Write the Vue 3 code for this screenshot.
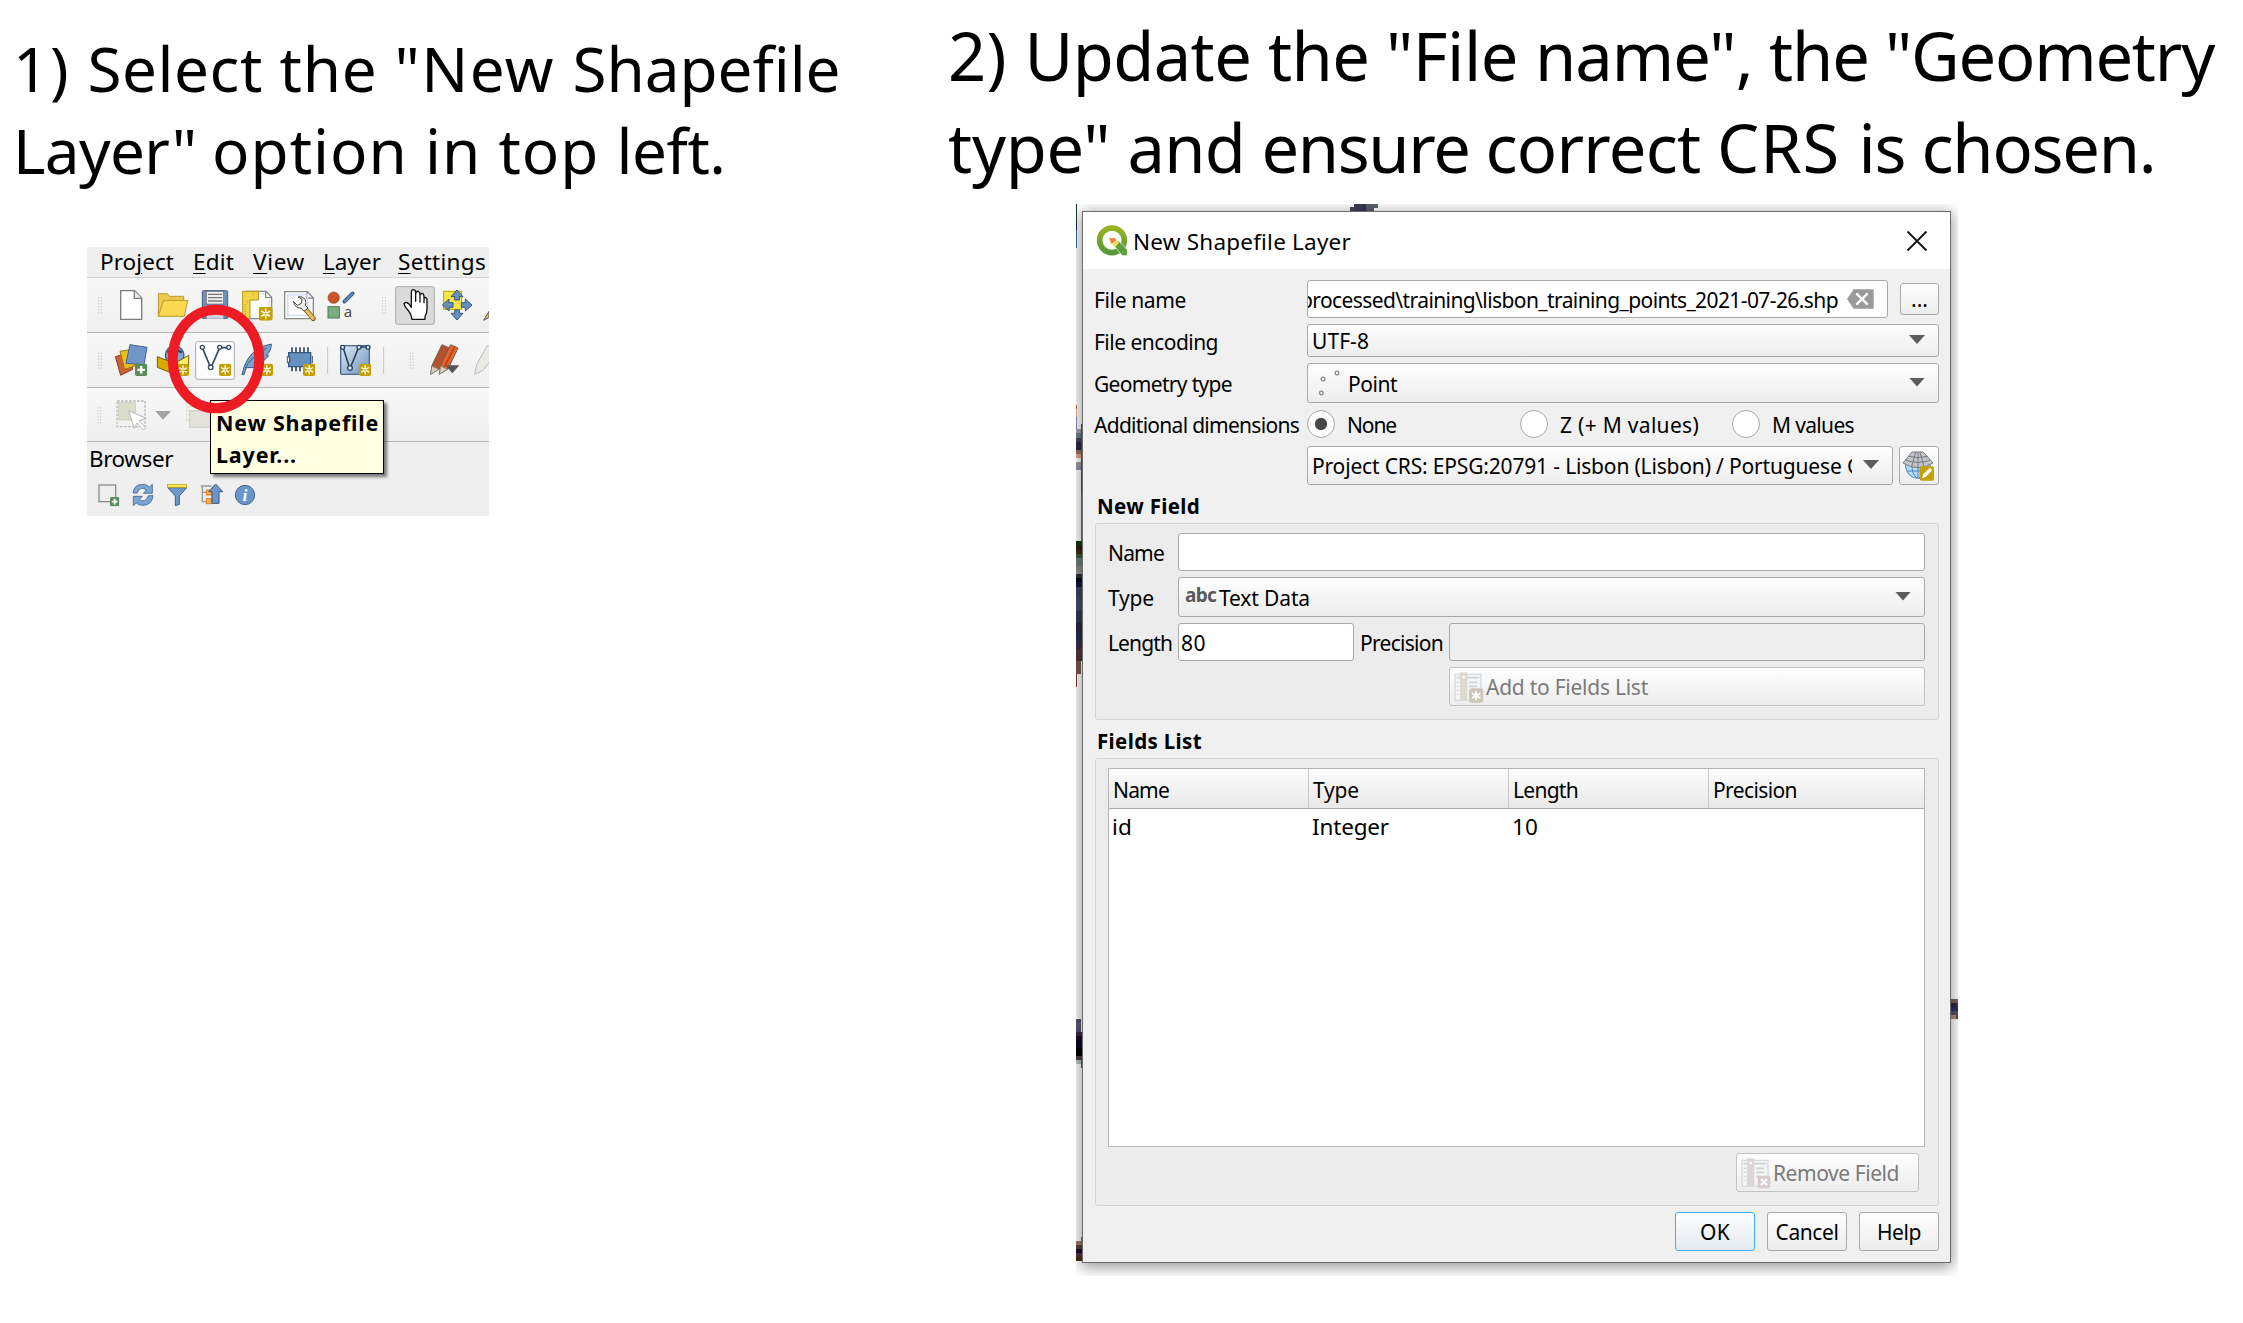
<script setup>
// v-fit spreads the letters of a label so that it takes the given advance width
const vFit = {
  mounted(el, { value }) {
    const natural = el.getBoundingClientRect().width
    el.style.letterSpacing = (value - natural) / el.textContent.length + 'px'
  },
}

const titleOne = [
  [['1) ', 74.5], ['Select ', 192], ['the ', 115], ['"New ', 178], ['Shapefile', 268]],
  [['Layer" ', 199], ['option ', 213], ['in ', 73.5], ['top ', 118], ['left.', 109]],
]
const titleTwo = [
  [['2) ', 76.5], ['Update ', 243.5], ['the ', 118], ['"File ', 149], ['name", ', 234], ['the ', 116], ['"Geometry', 329]],
  [['type" ', 179.5], ['and ', 134], ['ensure ', 224], ['correct ', 231.5], ['CRS ', 141.5], ['is ', 63], ['chosen.', 234]],
]

const menu = [
  { pre: 'Pro', key: 'j', post: 'ect', w: 74, gap: 19 },
  { pre: '', key: 'E', post: 'dit', w: 41, gap: 19 },
  { pre: '', key: 'V', post: 'iew', w: 52, gap: 18 },
  { pre: '', key: 'L', post: 'ayer', w: 58, gap: 17 },
  { pre: '', key: 'S', post: 'ettings', w: 88, gap: 0 },
]

const columns = [
  { name: 'Name', w: 56, value: 'id', vw: 20 },
  { name: 'Type', w: 46, value: 'Integer', vw: 77 },
  { name: 'Length', w: 65, value: '10', vw: 26 },
  { name: 'Precision', w: 84, value: '', vw: 0 },
]

// slivers of the map canvas visible around the dialog: x, y, w, h, colour
const scraps = [
  [0, 0, 1, 16, '#16303a'], [0, 16, 1, 10, '#1d2140'], [0, 26, 1, 18, '#3f6b96'],
  [274, 3, 4, 5, '#45454f'], [278, 0, 8, 8, '#3d3c58'], [286, 0, 4, 8, '#33324b'], [290, 0, 8, 8, '#5d5d70'], [298, 0, 4, 4, '#54696b'],
  [0, 201, 1, 4, '#b5694a'], [0, 205, 1, 8, '#eab79c'], [0, 213, 1, 12, '#8d86b5'], [0, 225, 5, 4, '#a6a5b5'], [0, 229, 5, 5, '#6e8480'],
  [0, 234, 5, 4, '#4a4455'], [0, 238, 5, 8, '#2e2746'], [0, 246, 5, 4, '#a3705f'], [0, 250, 5, 4, '#e5a486'], [0, 258, 5, 4, '#a99ba0'], [0, 262, 5, 4, '#9995ab'],
  [5, 220, 1, 30, '#4a5358'], [5, 250, 1, 40, '#5b5453'], [5, 290, 1, 47, '#7a6a63'],
  [0, 337, 6, 5, '#173314'], [0, 342, 6, 4, '#2f1e0c'], [0, 346, 6, 4, '#3c2a1b'], [0, 350, 6, 4, '#3d5a3b'], [0, 354, 6, 8, '#6e7f7d'],
  [0, 362, 6, 4, '#8b8784'], [0, 366, 6, 4, '#9a948e'], [0, 370, 6, 4, '#2d3040'], [0, 374, 6, 4, '#07091a'], [0, 378, 6, 5, '#151743'],
  [0, 383, 6, 12, '#3b4362'], [0, 395, 6, 12, '#424c70'], [0, 407, 6, 12, '#34375a'], [0, 419, 6, 10, '#2d2446'], [0, 429, 6, 8, '#213055'],
  [0, 437, 6, 8, '#3b2c4c'], [0, 445, 6, 12, '#54363d'], [0, 457, 5, 13, '#7b5650'], [0, 470, 1, 13, '#744237'],
  [0, 815, 5, 4, '#5c4f66'], [0, 819, 5, 4, '#5d5b6f'], [0, 823, 5, 5, '#5f5078'], [0, 828, 6, 4, '#382a4c'], [0, 832, 6, 4, '#1e1128'],
  [0, 836, 6, 8, '#0d0820'], [0, 844, 6, 8, '#000004'], [0, 852, 6, 4, '#4d4148'], [0, 856, 5, 4, '#b8c3bb'], [5, 856, 1, 8, '#55566d'],
  [0, 1037, 5, 4, '#a87866'], [5, 1033, 1, 8, '#9e6a52'], [0, 1041, 6, 4, '#554433'], [0, 1045, 6, 4, '#231029'], [0, 1049, 6, 4, '#523140'], [0, 1053, 6, 4, '#4a2c0d'],
  [874, 795, 8, 4, '#7e6355'], [874, 799, 6, 4, '#2b2240'], [880, 799, 2, 4, '#48394a'], [874, 803, 6, 4, '#30306a'], [880, 803, 2, 4, '#3d2254'],
  [874, 807, 6, 4, '#4a5670'], [880, 807, 2, 4, '#6a4a52'], [874, 811, 6, 4, '#b58c7a'], [880, 811, 2, 4, '#5a4a2c'],
]
</script>

<template>
  <main class="page">
    <svg class="defs" aria-hidden="true">
      <defs>
        <symbol id="star" viewBox="0 0 36 36">
          <rect x="0" y="0" width="36" height="36" rx="6" fill="#c4a000" />
          <path d="M18 6V30M8 12L28 24M28 12L8 24" stroke="#fff" stroke-width="4" stroke-linecap="round" />
          <circle cx="18" cy="18" r="2.5" fill="#c4a000" />
        </symbol>
        <symbol id="plus" viewBox="0 0 36 36">
          <rect width="36" height="36" rx="6" fill="#5a8c5a" />
          <path d="M18 7V29M7 18H29" stroke="#fff" stroke-width="7" />
        </symbol>
        <symbol id="table" viewBox="0 0 84 90">
          <rect x="3" y="8" width="78" height="78" fill="#f3f5f6" stroke="#d5dade" stroke-width="4" />
          <path d="M8 18H76M45 32H70M45 44H70M45 56H60" stroke="#cfd4d8" stroke-width="5" />
          <path d="M8 32H16M8 44H16M8 56H16M8 68H16" stroke="#cfd4d8" stroke-width="3" />
          <rect x="18" y="2" width="22" height="84" />
          <rect x="26" y="12" width="6" height="8" fill="#fff" />
        </symbol>
      </defs>
    </svg>

    <section class="step one">
      <h1><div v-for="(line, i) in titleOne" :key="i"><span v-for="[t, w] in line" :key="t" v-fit="w">{{ t }}</span></div></h1>

      <div class="qgis">
        <nav class="menu">
          <span v-for="m in menu" :key="m.key" v-fit="m.w" :style="{ marginRight: m.gap + 'px' }">{{ m.pre }}<u>{{ m.key }}</u>{{ m.post }}</span>
        </nav>

        <div class="bar">
          <svg width="30" height="54" viewBox="21 114 90 162"><path d="M56 172V220M64 172V220" class="grip" /></svg>
          <svg width="38" height="54" viewBox="111 114 114 162">
            <path d="M122 152H164L185 174V238H122Z" fill="#fff" stroke="#7b7d7e" stroke-width="4" /><path d="M163 153V175H184" fill="#eee" stroke="#7b7d7e" stroke-width="4" />
          </svg>
          <svg width="40" height="54" viewBox="225 114 120 162">
            <path d="M235 229V161H262L268 169H311V182" fill="#edc94c" stroke="#b89a2b" stroke-width="3" /><path d="M235 229L251 181H323L313 229Z" fill="#fbd84f" stroke="#b89a2b" stroke-width="3" />
          </svg>
          <svg width="44" height="54" viewBox="345 114 132 162">
            <path d="M367 155Q367 152 370 152H440Q443 152 443 155V235H367Z" fill="#6d92bd" stroke="#44607f" stroke-width="3" /><rect x="379" y="154" width="52" height="38" fill="#f1f1f1" stroke="#666" stroke-width="2" /><path d="M384 163H427M384 173H427M384 183H427" stroke="#777" stroke-width="4" /><rect x="380" y="206" width="50" height="30" fill="#ccd5df" />
          </svg>
          <svg width="41" height="54" viewBox="477 114 123 162">
            <path d="M500 154H558L575 172V236H500Z" fill="#fff" stroke="#888" stroke-width="4" /><path d="M557 155V173H574" fill="none" stroke="#888" stroke-width="4" /><path d="M508 162H552M567 180V205" stroke="#d5def0" stroke-width="4" />
            <path d="M488 154H535V180H510V236H488Z" fill="#f3d34a" stroke="#b59413" stroke-width="3" /><path d="M496 192V230M503 182V190M520 158V166" stroke="#b59413" stroke-width="3" stroke-dasharray="3 4" />
            <use href="#star" x="536" y="200" width="42" height="42" />
          </svg>
          <svg width="43" height="54" viewBox="600 114 129 162">
            <path d="M614 155H682L700 173V236H614Z" fill="#fff" stroke="#888" stroke-width="4" /><path d="M681 156V174H699" fill="none" stroke="#888" stroke-width="4" /><rect x="623" y="164" width="60" height="62" fill="none" stroke="#d5def0" stroke-width="5" />
            <path d="M675 206L700 236" stroke="#75601a" stroke-width="15" stroke-linecap="round" /><path d="M675 206L699 235" stroke="#e6bd5c" stroke-width="10" stroke-linecap="round" />
            <path d="M640 184L652 196L664 190L666 177L654 171Q668 168 675 178Q680 188 676 196L684 204L672 214L663 204Q646 206 640 184Z" fill="#eee" stroke="#444" stroke-width="3" />
          </svg>
          <svg width="54" height="54" viewBox="729 114 162 162">
            <circle cx="761" cy="173" r="17" fill="#cb5529" stroke="#9c3f1c" stroke-width="2" /><path d="M793 185L818 160" stroke="#3b5c86" stroke-width="11" stroke-linecap="round" /><path d="M794 184L817 161" stroke="#6690c4" stroke-width="5" stroke-linecap="round" /><rect x="744" y="200" width="34" height="34" fill="#79ad7d" stroke="#4c7a50" stroke-width="3" />
            <text x="791" y="232" font-size="45" fill="#4a4a4a" font-family="Noto Sans, sans-serif">a</text>
          </svg>
          <svg width="14" height="54" viewBox="891 114 42 162"><path d="M908 172V220M916 172V220" class="grip" /></svg>
          <svg width="48" height="54" viewBox="933 114 144 162">
            <rect x="947" y="140" width="116" height="113" rx="6" fill="#dadada" stroke="#aaa" stroke-width="3" />
            <path d="M996 238Q994 222 986 213Q974 200 972 191Q976 184 986 191L994 202V156Q995 148 1001 149Q1007 150 1007 158V184V160Q1009 153 1015 154Q1020 156 1020 164V186V165Q1023 159 1029 161Q1032 164 1032 170V188V175Q1038 169 1041 178V206Q1041 220 1035 230V238Z" fill="#fff" stroke="#111" stroke-width="4" stroke-linejoin="round" />
          </svg>
          <svg width="38" height="54" viewBox="1077 114 114 162">
            <rect x="1091" y="154" width="54" height="54" fill="#f9e547" stroke="#c4a000" stroke-width="3" />
            <path d="M1131 150L1149 170H1138V180H1124V170H1113ZM1131 240L1149 220H1138V210H1124V220H1113ZM1087 195L1107 177V188H1119V202H1107V213ZM1176 195L1156 177V188H1144V202H1156V213Z" fill="#6690c0" stroke="#35587f" stroke-width="3" />
          </svg>
          <svg width="12" height="54" viewBox="1191 114 36 162"><path d="M1211 241L1227 214V232Z" fill="#f0c848" stroke="#555" stroke-width="3" /></svg>
        </div>

        <div class="bar">
          <svg width="27" height="54" viewBox="21 279 81 162"><path d="M56 338V386M64 338V386" class="grip" /></svg>
          <svg width="42" height="54" viewBox="102 279 126 162">
            <path d="M106 350L148 338L158 388L122 406Z" fill="#cb6137" stroke="#913f1b" stroke-width="3" /><path d="M120 334L170 326L176 374L134 388Z" fill="#e9bd20" stroke="#9b7b08" stroke-width="3" /><path d="M150 314L201 322L192 374L138 370Z" fill="#6d97c8" stroke="#44658d" stroke-width="3" />
            <use href="#plus" x="165" y="371" width="37" height="37" />
          </svg>
          <svg width="38" height="54" viewBox="228 279 114 162">
            <circle cx="284" cy="346" r="28" fill="#7ea6d3" stroke="#3b5c86" stroke-width="4" /><path d="M262 338Q284 322 306 338" fill="none" stroke="#274566" stroke-width="7" /><path d="M232 350L284 370V403L232 382Z" fill="#d6ab00" stroke="#755e00" stroke-width="3" /><path d="M284 370L326 346V382L284 403Z" fill="#fbea6c" stroke="#755e00" stroke-width="3" />
            <use href="#star" x="291" y="372" width="36" height="36" />
          </svg>
          <svg width="43" height="54" viewBox="342 279 129 162">
            <rect x="347" y="305" width="116" height="113" rx="6" fill="#fdfdfd" stroke="#aaa" stroke-width="3" />
            <path d="M369 328L390 378M395 378L417 328M424 323H440" fill="none" stroke="#32485f" stroke-width="5" /><g fill="#fff" stroke="#32485f" stroke-width="4"><circle cx="367" cy="322" r="6" /><circle cx="419" cy="322" r="6" /><circle cx="446" cy="322" r="6" /><circle cx="392" cy="382" r="7" /></g>
            <use href="#star" x="417" y="371" width="37" height="37" />
          </svg>
          <svg width="46" height="54" viewBox="471 279 138 162">
            <path d="M486 404Q496 352 530 330Q552 315 574 312Q574 332 560 345L566 347Q550 368 532 372L538 376Q520 386 499 383L492 404Z" fill="#7aa2ce" stroke="#3b5c86" stroke-width="3" /><path d="M495 384Q515 350 560 324" fill="none" stroke="#3b5c86" stroke-width="3" />
            <use href="#star" x="542" y="371" width="37" height="37" />
          </svg>
          <svg width="38" height="54" viewBox="609 279 114 162">
            <path d="M636 322V394M648 322V394M660 322V394M672 322V380M684 322V380" stroke="#334b68" stroke-width="5" /><path d="M626 338H692V380H626V369Q634 359 626 350Z" fill="#6690c0" stroke="#35587f" stroke-width="4" /><path d="M622 348V370M697 348V370" stroke="#35587f" stroke-width="3" />
            <use href="#star" x="669" y="371" width="37" height="37" />
          </svg>
          <svg width="16" height="54" viewBox="723 279 48 162"><path d="M743 320V402" stroke="#c9c9c9" stroke-width="3" /></svg>
          <svg width="37" height="54" viewBox="771 279 111 162">
            <defs><linearGradient id="vg" x2="1" y2="1"><stop stop-color="#dfe9f4" /><stop offset="1" stop-color="#6d92bd" /></linearGradient></defs>
            <rect x="782" y="317" width="86" height="86" rx="3" fill="url(#vg)" stroke="#4d6a8c" stroke-width="4" />
            <path d="M790 325L807 378M813 378L835 325M842 321H862" stroke="#2c4561" stroke-width="5" /><g fill="#dbe8f7" stroke="#2c4561" stroke-width="4"><circle cx="788" cy="322" r="6" /><circle cx="837" cy="322" r="6" /><circle cx="864" cy="322" r="6" /><circle cx="810" cy="384" r="7" /></g>
            <use href="#star" x="837" y="371" width="37" height="37" />
          </svg>
          <svg width="53" height="54" viewBox="882 279 159 162"><path d="M911 320V402" stroke="#c9c9c9" stroke-width="3" /><path d="M991 338V386M999 338V386" class="grip" /></svg>
          <svg width="45" height="54" viewBox="1041 279 135 162">
            <path d="M1052 403L1056 376L1086 314L1108 324L1078 387Z" fill="#b4522d" stroke="#6c6052" stroke-width="3" /><path d="M1078 403L1082 376L1112 314L1134 324L1104 387Z" fill="#e8622a" stroke="#6c6052" stroke-width="3" /><path d="M1094 380L1124 320" stroke="#b9430f" stroke-width="5" /><path d="M1052 403L1056 378L1076 388ZM1078 403L1082 378L1102 388Z" fill="#ddd0b8" stroke="#777" stroke-width="2" /><path d="M1096 376H1138L1117 400Z" fill="#555" />
          </svg>
          <svg width="17" height="54" viewBox="1176 279 51 162"><path d="M1184 403L1190 374L1222 316L1230 320V365L1208 392Z" fill="#eaeae6" stroke="#bdbdb8" stroke-width="3" /></svg>
        </div>

        <div class="bar low">
          <svg width="27" height="53" viewBox="21 54 81 159"><path d="M54 112V160M62 112V160" class="grip" /></svg>
          <svg width="72" height="53" viewBox="102 54 216 159">
            <rect x="111" y="93" width="84" height="77" fill="none" stroke="#bbb" stroke-width="4" stroke-dasharray="8 4" /><rect x="116" y="98" width="50" height="52" fill="#dcdccd" stroke="#c5c5b5" stroke-width="2" /><path d="M146 122L199 145L177 152L198 173L190 180L171 159L163 175Z" fill="#fff" stroke="#b8b8b8" stroke-width="3" /><path d="M226 123H273L249 149Z" fill="#a3a3a3" />
          </svg>
          <svg width="37" height="53" viewBox="318 54 111 159"><rect x="318" y="96" width="70" height="55" fill="#f2f2ee" stroke="#d5d5cd" stroke-width="3" /><path d="M325 110H375M325 122H375M325 134H375" stroke="#d5d5cd" stroke-width="4" /><rect x="329" y="122" width="72" height="50" fill="#e2e2da" stroke="#d0d0c8" stroke-width="3" /></svg>
        </div>

        <div class="browser"><span v-fit="84">Browser</span></div>
        <div class="tools">
          <svg width="33" height="24" viewBox="51 340 99 72"><rect x="57" y="346" width="50" height="50" fill="none" stroke="#8c8c86" stroke-width="4" /><use href="#plus" x="90" y="382" width="28" height="28" /></svg>
          <svg width="34" height="24" viewBox="150 340 102 72">
            <path d="M159 370Q162 344 188 344Q201 344 208 352L217 344V371H190L199 361Q192 354 184 356Q174 359 172 370Z" fill="#7ba5d4" stroke="#416994" stroke-width="2.5" /><path d="M219 378Q216 407 188 407Q177 407 169 400L160 408V380H187L178 389Q185 396 194 393Q202 389 205 378Z" fill="#7ba5d4" stroke="#416994" stroke-width="2.5" />
          </svg>
          <svg width="34" height="24" viewBox="252 340 102 72"><path d="M263 354H320L298 379V404L286 408V379Z" fill="#6d97c8" stroke="#3d608c" stroke-width="3" /><rect x="262" y="344" width="58" height="9" fill="#fce94f" stroke="#b7a01d" stroke-width="2" /></svg>
          <svg width="34" height="24" viewBox="354 340 102 72"><path d="M362 349H395M367 349V396H380M367 368H380" fill="none" stroke="#989898" stroke-width="4" /><rect x="379" y="361" width="15" height="15" fill="#ffb066" stroke="#e47b17" stroke-width="3" /><rect x="379" y="387" width="15" height="15" fill="#ffb066" stroke="#e47b17" stroke-width="3" /><path d="M407 343L428 366H417V401H396V366H386Z" fill="#6d97c8" stroke="#35587f" stroke-width="3" /></svg>
          <svg width="24" height="24" viewBox="456 340 72 72"><circle cx="495" cy="376" r="29" fill="#6896cc" stroke="#44658d" stroke-width="3" /><text x="495" y="394" text-anchor="middle" font-size="53" font-weight="700" font-style="italic" font-family="Liberation Serif, serif" fill="#fff">i</text></svg>
        </div>

        <div class="tip"><span v-fit="163">New Shapefile</span><br><span v-fit="81">Layer...</span></div>
        <svg class="ring" width="98" height="110" viewBox="0 0 98 110"><ellipse cx="49" cy="55" rx="43.3" ry="49.3" fill="none" stroke="#ed1c24" stroke-width="10" /></svg>
      </div>
    </section>

    <section class="step two">
      <h1><div v-for="(line, i) in titleTwo" :key="i"><span v-for="([t, w], j) in line" :key="j" v-fit="w">{{ t }}</span></div></h1>

      <div class="canvas">
        <svg class="scraps" width="882" height="1072" shape-rendering="crispEdges"><rect v-for="(s, i) in scraps" :key="i" :x="s[0]" :y="s[1]" :width="s[2]" :height="s[3]" :fill="s[4]" /></svg>

        <div class="dialog">
          <header>
            <svg width="32" height="32" viewBox="0 0 96 96">
              <defs><linearGradient id="qg" x2="0" y2="1"><stop stop-color="#97b422" /><stop offset="1" stop-color="#56983a" /></linearGradient></defs>
              <circle cx="48" cy="46" r="37" fill="none" stroke="url(#qg)" stroke-width="17" />
              <path d="M52 60L68 48L94 74V92H79Z" fill="#5ea03c" stroke="#fff" stroke-width="2" /><path d="M39 40L56 39L61 46L47 57Z" fill="#f0813a" /><path d="M47 57L61 46L69 53L57 67Z" fill="#f3e05a" />
            </svg>
            <span v-fit="218">New Shapefile Layer</span>
            <svg class="close" width="22" height="22" viewBox="0 0 22 22"><path d="M1.5 1.5L20.5 20.5M20.5 1.5L1.5 20.5" stroke="#111" stroke-width="1.8" /></svg>
          </header>

          <div class="body">
            <div class="row r38">
              <label><span v-fit="92">File name</span></label>
              <div class="field path"><span v-fit="538">processed\training\lisbon_training_points_2021-07-26.shp</span>
                <svg width="27" height="20" viewBox="0 0 81 60"><path d="M0 30L20 1H80V59H20Z" fill="#9a9a9a" /><path d="M28 13L62 47M62 13L28 47" stroke="#fff" stroke-width="7" /></svg>
              </div>
              <button class="dots"><span>...</span></button>
            </div>
            <div class="row r33">
              <label><span v-fit="124">File encoding</span></label>
              <div class="field combo"><span v-fit="57">UTF-8</span><i class="arrow"></i></div>
            </div>
            <div class="row r40">
              <label><span v-fit="138">Geometry type</span></label>
              <div class="field combo point">
                <svg width="26" height="28" viewBox="0 0 78 84" fill="none" stroke="#8b8b88" stroke-width="4"><circle cx="54" cy="12" r="5.5" /><circle cx="12" cy="30" r="5.5" /><circle cx="8" cy="72" r="5.5" transform="translate(-1 0)" /></svg>
                <span v-fit="49">Point</span><i class="arrow"></i>
              </div>
            </div>
            <div class="row r28">
              <label><span v-fit="205">Additional dimensions</span></label>
              <div class="choice c1"><i class="radio on"></i><span v-fit="49">None</span></div>
              <div class="choice c2"><i class="radio"></i><span v-fit="139">Z (+ M values)</span></div>
              <div class="choice"><i class="radio"></i><span v-fit="82">M values</span></div>
            </div>
            <div class="row r39">
              <label></label>
              <div class="field combo crs"><div class="clip"><span v-fit="550">Project CRS: EPSG:20791 - Lisbon (Lisbon) / Portuguese G</span></div><i class="arrow"></i></div>
              <button class="globe">
                <svg width="34" height="34" viewBox="0 0 102 102">
                  <circle cx="48" cy="51" r="37" fill="#b8dcf8" stroke="#4c86b8" stroke-width="3" /><path d="M48 45V88M30 50Q30 76 45 87M66 50Q66 76 51 87M15 66H81" fill="none" stroke="#4c86b8" stroke-width="3" />
                  <path d="M30 9H64L93 42Q70 56 48 56Q25 56 3 42Z" fill="#c2c5c9" stroke="#777b80" stroke-width="3" /><path d="M41 9L29 53M54 9L66 53M20 22Q48 30 76 22M12 34Q48 46 84 34M48 9V56" fill="none" stroke="#777b80" stroke-width="3" />
                  <rect x="53" y="52" width="43" height="43" rx="6" fill="#c4a000" /><path d="M60 88L64 75L84 56L91 63L72 83Z" fill="#fff" />
                </svg>
              </button>
            </div>

            <h2 class="h-new"><span v-fit="103">New Field</span></h2>
            <div class="group new">
              <div class="row r38"><label class="s"><span v-fit="56">Name</span></label><div class="field white"></div></div>
              <div class="row r40"><label class="s"><span v-fit="46">Type</span></label>
                <div class="field combo text"><b v-fit="31">abc</b><span v-fit="91">Text Data</span><i class="arrow"></i></div></div>
              <div class="row r38"><label class="s"><span v-fit="64">Length</span></label><div class="field white len"><span v-fit="25">80</span></div><label class="p"><span v-fit="83">Precision</span></label><div class="field off"></div></div>
              <button class="dis add"><svg width="30" height="32" viewBox="0 0 90 96" fill="#dcd9cf"><use href="#table" x="0" y="2" width="84" height="90" /><rect x="45" y="52" width="43" height="43" rx="8" fill="#cbc7ba" /><path d="M66 60V88M54 67L79 81M79 67L54 81" stroke="#fff" stroke-width="5" /></svg><span v-fit="162">Add to Fields List</span></button>
            </div>

            <h2 class="h-list"><span v-fit="105">Fields List</span></h2>
            <div class="group list">
              <div class="table">
                <div class="thead"><div v-for="c in columns" :key="c.name"><span v-fit="c.w">{{ c.name }}</span></div></div>
                <div class="trow"><div v-for="c in columns" :key="c.name"><span v-if="c.value" v-fit="c.vw">{{ c.value }}</span></div></div>
              </div>
              <button class="dis rem"><svg width="30" height="32" viewBox="0 0 90 96" fill="#ddd6d6"><use href="#table" x="0" y="2" width="84" height="90" /><rect x="50" y="56" width="38" height="38" rx="8" fill="#d6cccc" /><path d="M60 66L78 84M78 66L60 84" stroke="#fff" stroke-width="7" /></svg><span v-fit="126">Remove Field</span></button>
            </div>

            <footer>
              <button class="ok"><span v-fit="30">OK</span></button>
              <button><span v-fit="63">Cancel</span></button>
              <button><span v-fit="44">Help</span></button>
            </footer>
          </div>
        </div>
      </div>
    </section>
  </main>
</template>

<style>
body { margin: 0; background: #fff; }
</style>

<style scoped>
* { box-sizing: border-box; }
.page { width: 2243px; height: 1323px; display: flex; overflow: hidden; font-family: "Noto Sans", "Open Sans", sans-serif; color: #000; font-size: 21px; }
.defs { position: absolute; width: 0; height: 0; }
span, b { display: inline-block; white-space: pre; }
h1 { margin: 0; font-weight: 400; white-space: nowrap; }
svg { display: block; flex: none; }

.one { width: 946px; padding: 27px 0 0 13px; }
.one h1 { font-size: 62px; line-height: 82px; height: 220px; }
.two { flex: 1; }
.two h1 { font-size: 66.8px; line-height: 92px; height: 194px; margin: 10px 0 0 2px; }

.qgis { position: relative; width: 402px; height: 269px; margin-left: 74px; background: #efefef; }
.menu { display: flex; height: 31px; padding-left: 13px; border-bottom: 1px solid #d0d0d0; font-size: 22.5px; line-height: 29px; }
.menu u { text-decoration-thickness: 1px; text-underline-offset: 3px; }
.bar { display: flex; height: 55px; border-bottom: 1px solid #b5b5b5; background: linear-gradient(#f8f8f8, #efefef); overflow: hidden; }
.low { height: 54px; }
.grip { stroke: #b5b5b5; stroke-width: 3; stroke-dasharray: 3 6; }
.browser { height: 41px; padding-left: 2px; font-size: 22.5px; line-height: 34px; }
.tools { display: flex; padding-left: 10px; }
.tip { position: absolute; left: 123px; top: 153px; width: 174px; height: 74px; border: 1px solid #000; background: #ffffe1; box-shadow: 3px 3px 3px rgba(0, 0, 0, .5); padding: 6px 0 0 5px; font-weight: 700; font-size: 21.5px; line-height: 32px; }
.ring { position: absolute; left: 80px; top: 57px; }

.canvas { position: relative; width: 882px; height: 1072px; margin-left: 130px; overflow: hidden; padding: 7px 0 0 6px; }
.scraps { position: absolute; left: 0; top: 0; }
.dialog { position: relative; width: 869px; height: 1052px; border: 1px solid #6b6b6b; background: #f0f0f0; box-shadow: 0 3px 14px 1px rgba(0, 0, 0, .42); }
header { display: flex; align-items: center; height: 57px; padding: 0 22px 0 13px; background: #fff; font-size: 22.5px; }
header span { margin: 2px 0 0 5px; }
.close { margin-left: auto; }
.body { padding: 11px 11px 0 12px; }
.row { display: flex; align-items: center; margin-bottom: 6px; }
.r38 { height: 38px; } .r33 { height: 33px; } .r40 { height: 40px; } .r28 { height: 28px; margin: 7px 0 8px; } .r39 { height: 39px; margin: 0; }
label { flex: none; width: 212px; padding-top: 2px; margin-left: -1px; margin-right: 1px; line-height: 28px; }
.field { flex: 1; align-self: stretch; display: flex; align-items: center; border: 1px solid #a9a9a9; border-radius: 3px; background: #fff; min-width: 0; }
.combo, button { background: linear-gradient(#fefefe, #ededed); }
.combo { padding: 0 13px 0 4px; }
.arrow { margin-left: auto; flex: none; width: 16px; height: 9px; background: #5c5c5c; clip-path: polygon(0 0, 100% 0, 50% 100%); margin-top: -2px; }
.path { justify-content: flex-end; overflow: hidden; padding-right: 13px; }
.path span { flex: none; padding-top: 2px; }
.path svg { margin-left: 9px; }
button { display: flex; align-items: center; justify-content: center; flex: none; border: 1px solid #a9a9a9; border-radius: 3px; padding: 0; font: inherit; color: #000; }
.dots { width: 39px; height: 32px; margin-left: 12px; }
.point { padding-left: 11px; }
.point span { margin: 2px 0 0 3px; }
.choice { display: flex; align-items: center; }
.choice span { margin-left: 12px; padding-top: 2px; }
.c1 { width: 213px; } .c2 { width: 212px; }
.radio { flex: none; width: 28px; height: 28px; border: 1px solid #a9a9a9; border-radius: 50%; background: #fff; }
.on { background: radial-gradient(circle, #484848 5.6px, #fff 6.6px); }
.crs { padding-right: 13px; }
.clip { width: 540px; overflow: hidden; }
.globe { width: 40px; height: 39px; margin-left: 6px; }
h2 { margin: 0; font-size: 20.5px; line-height: 28px; font-weight: 700; padding-left: 2px; height: 38px; padding-top: 7px; }
.group { border: 1px solid #d4d4d4; border-radius: 3px; background: #ececec; padding: 9px 13px 0 12px; }
.new { height: 197px; } .list { height: 448px; }
.s { width: 70px; margin: 0; }
.text { padding-left: 6px; }
.text b { font: 700 19px/20px "Noto Sans", sans-serif; color: #5a5a5a; margin-top: -4px; }
.text span { margin: 2px 0 0 3px; }
.len { flex: none; width: 176px; padding: 2px 0 0 2px; }
.p { width: 88px; margin: 0 0 0 5px; padding-left: 1px; }
.p + .field { margin-left: 2px; }
.off { background: #efefef; }
.dis { border-color: #c3c3c3; color: #7a7a7a; justify-content: flex-start; height: 39px; padding-left: 4px; }
.dis span { margin-left: 2px; padding-top: 1px; }
.add { width: 476px; margin-left: 341px; }
.rem { width: 183px; margin: 6px 6px 0 auto; }
.table { height: 379px; border: 1px solid #b5b5b5; background: #fff; }
.thead, .trow { display: grid; grid-template-columns: 200px 200px 200px 1fr; }
.thead { height: 40px; background: linear-gradient(#fcfcfc, #e9e9e9); border-bottom: 1px solid #a9a9a9; }
.thead div { border-right: 1px solid #c9c9c9; padding-left: 4px; line-height: 42px; height: 39px; }
.thead div:last-child { border: 0; }
.trow { font-size: 22.5px; line-height: 36px; }
.trow div { padding-left: 3px; }
footer { display: flex; justify-content: flex-end; gap: 12px; margin-top: 6px; }
footer button { width: 80px; height: 39px; }
.ok { border-color: #3daefd; background: linear-gradient(#fdfeff, #e3e9ee); }
</style>
